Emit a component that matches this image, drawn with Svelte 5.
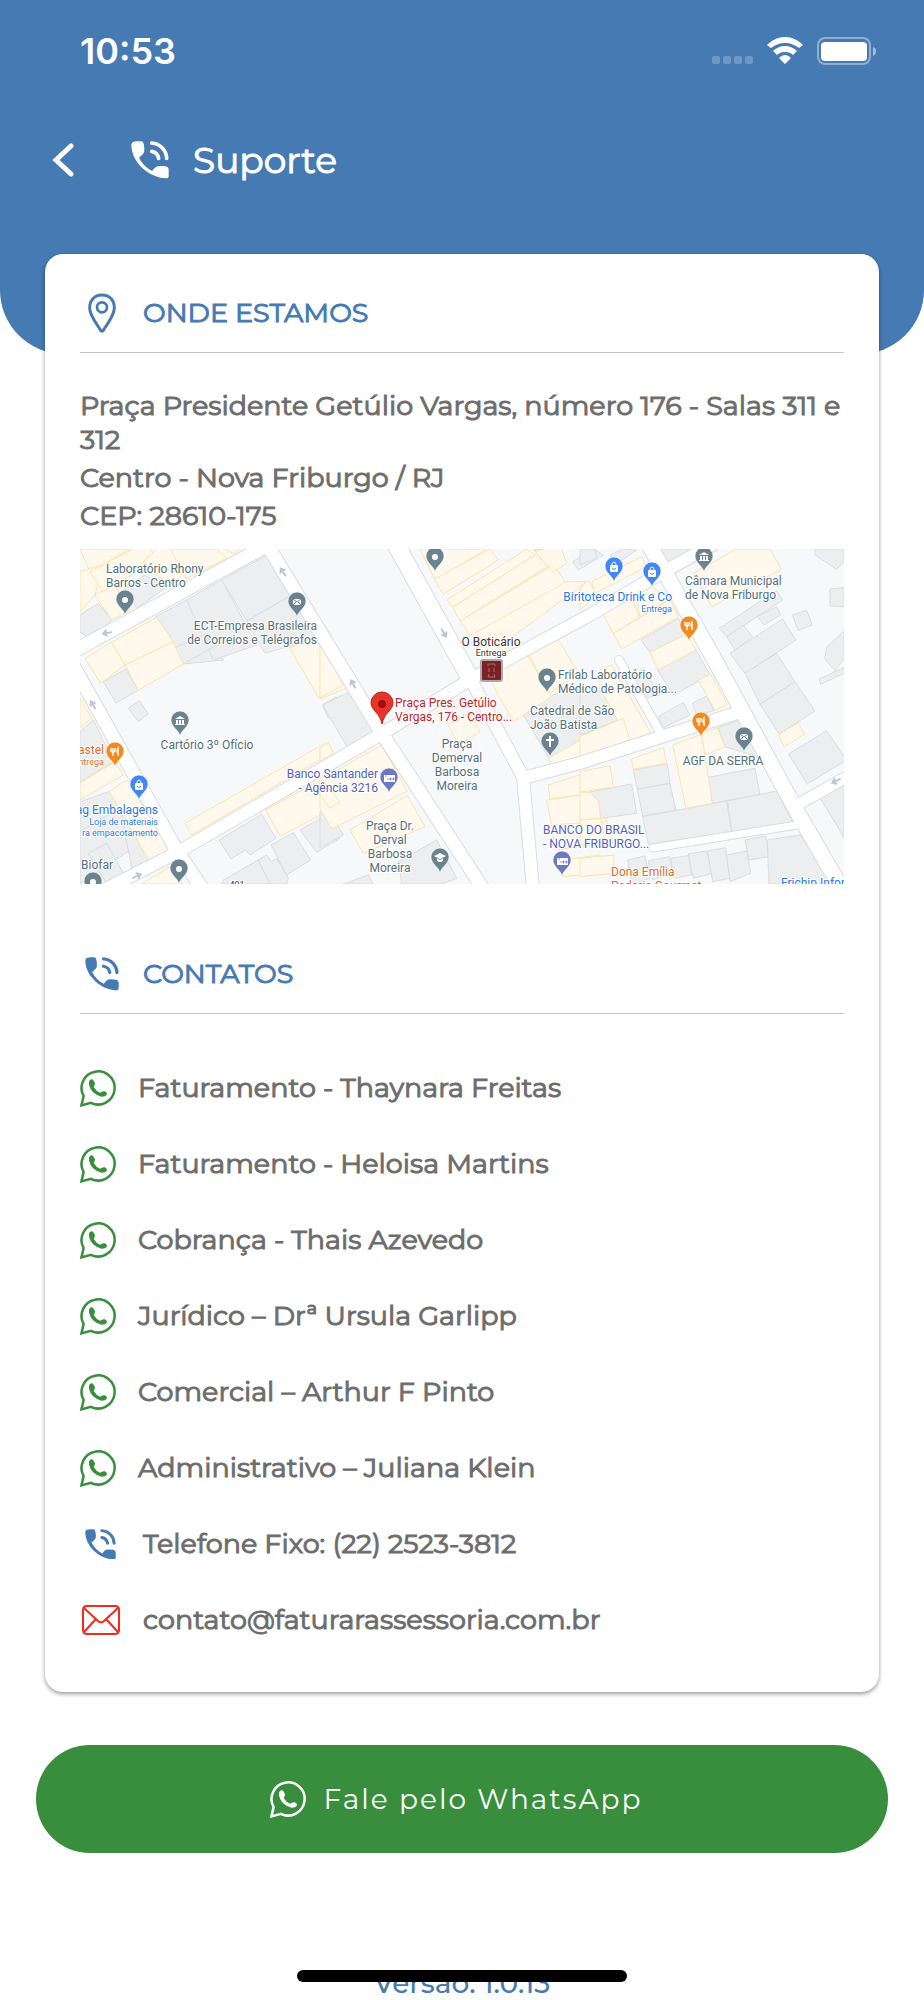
<script lang="ts">
  type Tile = { x: number; shops: string[]; blocks: string[] };
  type Pin = { x: number; y: number; kind: string; color: string };
  type Label = { x: number; y: number; lines: string[]; tone: string; anchor?: string; small?: boolean };

  const contacts = [
    { icon: "whatsapp", text: "Faturamento - Thaynara Freitas", href: "#thaynara" },
    { icon: "whatsapp", text: "Faturamento - Heloisa Martins", href: "#heloisa" },
    { icon: "whatsapp", text: "Cobrança - Thais Azevedo", href: "#thais" },
    { icon: "whatsapp", text: "Jurídico – Drª Ursula Garlipp", href: "#ursula" },
    { icon: "whatsapp", text: "Comercial – Arthur F Pinto", href: "#arthur" },
    { icon: "whatsapp", text: "Administrativo – Juliana Klein", href: "#juliana" },
    { icon: "phone", text: "Telefone Fixo: (22) 2523-3812", href: "tel:+552225233812" },
    { icon: "mail", text: "contato@faturarassessoria.com.br", href: "mailto:contato@faturarassessoria.com.br" }
  ];

  // Buildings, three tiles drawn at 3x and scaled down
  const tiles: Tile[] = [
    {
      x: -10,
      shops: [
        "30,12 180,12 60,80", "30,80 100,60 75,150 30,200", "75,150 130,120 190,190 125,225",
        "60,80 230,-10 260,45 100,140", "220,50 260,12 300,0 350,100 300,125", "300,12 440,12 470,40 350,100",
        "440,0 530,0 490,25", "125,292 260,217 310,290 165,360", "45,340 125,292 165,360 92,415",
        "165,360 310,290 340,357 205,436", "660,310 745,265 830,430 748,462", "345,835 770,592 790,620 365,870",
        "588,795 780,690 830,770 630,873", "30,460 65,520 30,548", "30,715 135,650 160,690 30,765",
        "118,740 170,705 305,920 245,960", "215,1017 300,965 340,1017"
      ],
      blocks: [
        "30,210 85,175 125,225 65,280 30,262", "165,130 225,90 285,130 200,190", "258,215 350,165 460,345 340,357",
        "350,165 455,105 560,300 430,345", "455,105 600,25 665,150 530,228", "530,228 665,150 740,280 585,325",
        "310,310 400,270 440,300 340,357", "100,410 168,372 205,436 138,474", "175,490 208,467 235,507 205,530",
        "30,560 70,525 130,650 30,712", "30,770 118,740 150,790 30,860", "30,860 150,790 215,890 60,1000 30,1017",
        "55,925 110,895 160,985 110,1017", "150,790 118,740 245,960 190,990", "447,885 575,808 618,880 540,930 527,915 483,942",
        "603,900 670,863 722,945 650,990", "455,1017 460,1005 565,945 600,1017", "565,945 590,930 605,950 620,940 655,1000 650,1017 600,1017",
        "690,855 790,800 810,880 740,922", "757,480 800,455 820,490 775,520"
      ]
    },
    {
      x: 240,
      shops: [
        "300,12 345,105 500,12", "343,103 510,12 535,45 370,147", "380,165 620,12 645,30 398,187",
        "398,187 645,30 690,60 420,228", "420,228 700,60 740,115 450,272", "645,20 720,0 740,55 700,80",
        "450,272 740,110 800,110 545,300", "470,310 545,262 570,315 500,360", "510,405 615,317 695,455 580,530",
        "620,320 710,275 775,385 690,445", "385,540 450,500 480,560 415,600", "0,285 70,420 0,458",
        "0,610 25,592 40,625 0,650", "0,705 185,600 262,738 35,852 0,790", "90,855 262,752 315,845 130,925",
        "685,720 810,680 850,740 690,762", "680,765 850,740 860,830 695,840", "695,840 860,830 880,890 705,915",
        "730,945 840,930 840,985 728,995", "685,640 810,570 870,620 700,672", "0,700 60,770 30,790 0,750"
      ],
      blocks: [
        "8,480 105,432 170,560 82,607", "610,510 700,450 800,420 860,540 690,645", "0,800 25,792 70,870 0,908",
        "235,950 350,885 410,1000 365,1017 245,1017", "758,50 820,12 850,30 775,75", "640,12 670,12 655,25",
        "70,1017 145,990 160,1017"
      ]
    },
    {
      x: 500,
      shops: [
        "0,130 25,105 50,150 0,195", "35,110 185,35 200,65 45,145", "65,200 150,155 180,215 100,265",
        "100,265 270,165 295,215 125,312", "165,145 215,125 265,165 180,215", "340,85 470,12 570,12 604,72 395,185",
        "210,322 320,268 348,314 235,375", "355,405 392,388 442,478 405,497", "60,375 95,360 212,563 150,592 60,430",
        "0,575 130,520 152,592 0,640", "278,600 365,568 397,775 318,790", "365,568 412,548 435,605 375,630",
        "155,642 250,608 260,655 160,673", "595,570 655,533 673,568 612,605", "0,680 90,662 100,725 0,742",
        "0,742 28,742 55,768 62,820 0,825", "0,825 62,820 75,890 0,900", "0,940 102,930 102,985 0,995"
      ],
      blocks: [
        "90,30 130,12 170,15 110,55", "232,375 348,314 390,390 280,450", "183,285 295,220 320,268 210,322",
        "235,515 310,472 330,510 250,548", "337,475 380,453 402,497 350,510", "418,250 590,137 608,165 440,275",
        "440,275 490,240 518,275 465,315", "533,215 590,185 602,210 552,240", "450,325 608,222 648,285 495,385",
        "495,385 590,325 645,410 540,478", "540,478 645,410 705,498 598,567", "637,210 680,196 697,240 655,257",
        "625,627 740,558 800,645 682,717", "705,12 792,12 792,50 770,73 705,30", "750,132 792,128 792,185 750,183",
        "742,305 792,258 792,340 765,377 733,340", "717,402 792,368 792,385 722,418", "230,12 340,12 265,62",
        "415,548 493,520 550,640 435,605", "385,697 525,670 540,748 397,775", "188,815 440,768 455,862 205,898",
        "443,768 590,738 640,835 455,862", "25,742 155,717 170,805 62,820", "160,675 262,656 270,715 172,733",
        "172,733 270,715 287,795 188,813", "143,945 195,933 210,1000 155,1017", "205,948 268,935 280,985 218,1005",
        "272,940 325,932 335,990 283,1000", "325,927 380,918 398,985 340,1000", "382,918 437,908 450,1000 398,1010",
        "440,930 500,918 512,985 450,1010", "495,885 557,873 567,935 507,945", "562,885 660,870 760,1017 567,1017",
        "705,735 792,685 792,880 770,840", "155,400 190,370 240,450 190,460", "0,445 60,430 130,520 0,570",
        "0,12 45,12 50,40 0,60"
      ]
    }
  ];

  const roads = [
    { d: "M-6 102 L184 -2", w: 13 },
    { d: "M186 -6 L303 186 L402 338", w: 13 },
    { d: "M315 -6 L390 129", w: 17 },
    { d: "M390 129 L443 228 L453 340", w: 12 },
    { d: "M20 343 L98 303 L303 184 L393 129 L510 66 L583 23 L634 -5", w: 12 },
    { d: "M-6 118 L97 302 L124 342", w: 13 },
    { d: "M568 -6 L632 106 L715 259 L764 344", w: 15 },
    { d: "M443 229 L500 214 L587 186 L660 163", w: 12 },
    { d: "M717 256 L770 226", w: 11 },
    { d: "M573 299 L717 276", w: 7 },
    { d: "M539 111 L580 183", w: 8 }
  ];

  const arrows = [
    { x: 27, y: 84, turn: 170 }, { x: 203, y: 23, turn: 235 }, { x: 13, y: 156, turn: 240 },
    { x: 57, y: 327, turn: -25 }, { x: 364, y: 84, turn: 60 }, { x: 273, y: 135, turn: 240 },
    { x: 756, y: 232, turn: 155 }
  ];

  const SLATE = "#6a838f";
  const BLUE = "#4285f4";
  const ORANGE = "#f28b1f";
  const INDIGO = "#6b78c4";

  const pins: Pin[] = [
    { x: 45, y: 66, kind: "dot", color: SLATE },
    { x: 217, y: 68, kind: "mail", color: SLATE },
    { x: 100, y: 187, kind: "bank", color: SLATE },
    { x: 35, y: 218, kind: "food", color: ORANGE },
    { x: 59, y: 251, kind: "bag", color: BLUE },
    { x: 13, y: 348, kind: "dot", color: SLATE },
    { x: 99, y: 335, kind: "dot", color: SLATE },
    { x: 355, y: 23, kind: "dot", color: SLATE },
    { x: 467, y: 144, kind: "dot", color: SLATE },
    { x: 470, y: 208, kind: "cross", color: SLATE },
    { x: 309, y: 244, kind: "cash", color: INDIGO },
    { x: 360, y: 324, kind: "school", color: SLATE },
    { x: 482, y: 327, kind: "cash", color: INDIGO },
    { x: 534, y: 33, kind: "bag", color: BLUE },
    { x: 572, y: 38, kind: "bag", color: BLUE },
    { x: 624, y: 23, kind: "bank", color: SLATE },
    { x: 609, y: 92, kind: "food", color: ORANGE },
    { x: 621, y: 188, kind: "food", color: ORANGE },
    { x: 664, y: 203, kind: "mail", color: SLATE }
  ];

  const labels: Label[] = [
    { x: 26, y: 24, lines: ["Laboratório Rhony", "Barros - Centro"], tone: "slate" },
    { x: 237, y: 81, lines: ["ECT-Empresa Brasileira", "de Correios e Telégrafos"], tone: "slate", anchor: "end" },
    { x: 127, y: 200, lines: ["Cartório 3º Ofício"], tone: "slate", anchor: "middle" },
    { x: 24, y: 205, lines: ["astel"], tone: "orange", anchor: "end" },
    { x: 24, y: 216, lines: ["ntrega"], tone: "orange", anchor: "end", small: true },
    { x: 78, y: 265, lines: ["ag Embalagens"], tone: "blue", anchor: "end" },
    { x: 78, y: 276, lines: ["Loja de materiais", "ra empacotamento"], tone: "blue", anchor: "end", small: true },
    { x: 1, y: 320, lines: ["Biofar"], tone: "slate" },
    { x: 157, y: 339, lines: ["491"], tone: "dark", anchor: "middle", small: true },
    { x: 298, y: 229, lines: ["Banco Santander", "- Agência 3216"], tone: "indigo", anchor: "end" },
    { x: 310, y: 281, lines: ["Praça Dr.", "Derval", "Barbosa", "Moreira"], tone: "slate", anchor: "middle" },
    { x: 377, y: 199, lines: ["Praça", "Demerval", "Barbosa", "Moreira"], tone: "slate", anchor: "middle" },
    { x: 411, y: 97, lines: ["O Boticário"], tone: "dark", anchor: "middle" },
    { x: 411, y: 107, lines: ["Entrega"], tone: "dark", anchor: "middle", small: true },
    { x: 315, y: 158, lines: ["Praça Pres. Getúlio", "Vargas, 176 - Centro..."], tone: "red" },
    { x: 478, y: 130, lines: ["Frilab Laboratório", "Médico de Patologia..."], tone: "slate" },
    { x: 450, y: 166, lines: ["Catedral de São", "João Batista"], tone: "slate" },
    { x: 592, y: 52, lines: ["Biritoteca Drink e Co"], tone: "blue", anchor: "end" },
    { x: 592, y: 63, lines: ["Entrega"], tone: "blue", anchor: "end", small: true },
    { x: 605, y: 36, lines: ["Câmara Municipal", "de Nova Friburgo"], tone: "slate" },
    { x: 643, y: 216, lines: ["AGF DA SERRA"], tone: "slate", anchor: "middle" },
    { x: 463, y: 285, lines: ["BANCO DO BRASIL", "- NOVA FRIBURGO..."], tone: "indigo" },
    { x: 531, y: 327, lines: ["Dona Emília", "Padaria Gourmet"], tone: "orange" },
    { x: 701, y: 338, lines: ["Frichip Infor"], tone: "blue" }
  ];
</script>

{#snippet phoneIcon()}
  <svg class="phone-icon" viewBox="0 0 114 113" aria-hidden="true">
    <path fill="currentColor" d="M6 3 Q10 0 30 1 Q37 1 38 8 L40 22 Q41 34 36 39 L24 50 Q37 76 63 90 L72 80 Q77 75 85 75 L104 76 Q113 78 113 86 V105 Q113 112 105 112 C55 110 2 66 1 12 Q1 6 6 3Z" />
    <path fill="none" stroke="currentColor" stroke-width="11" stroke-linecap="round" d="M62 6 A48 48 0 0 1 107 52 M62 31 A26 26 0 0 1 83 52" />
  </svg>
{/snippet}

{#snippet whatsappIcon()}
  <svg class="whatsapp-icon" viewBox="0 0 100 106" aria-hidden="true">
    <path fill="none" stroke="currentColor" stroke-width="7" d="M10 75 A46 46 0 1 1 30 94 L4 101 Z" />
    <path fill="currentColor" d="M27 31 Q33 26 37 31 Q43 38 41 44 L38 50 Q45 62 56 66 Q62 60 69 62 Q76 66 75 70 Q71 77 60 77 Q31 70 25 43 Q24 35 27 31Z" />
  </svg>
{/snippet}

{#snippet pinGlyph(kind: string)}
  {#if kind === "dot"}
    <circle cy="-15" r="3" fill="#fff" />
  {:else if kind === "mail"}
    <rect x="-4" y="-18" width="8" height="6" fill="#fff" />
    <path d="M-4 -18 L0 -15 L4 -18 M-4 -12 L-1 -15 M4 -12 L1 -15" stroke={SLATE} fill="none" />
  {:else if kind === "bank"}
    <path d="M-5 -17 L0 -20 L5 -17 Z M-5 -12 H5 V-11 H-5Z M-4 -16 H-2 V-12 H-4Z M-1 -16 H1 V-12 H-1Z M2 -16 H4 V-12 H2Z" fill="#fff" />
  {:else if kind === "food"}
    <path d="M-4 -19 V-16 Q-4 -15 -2 -15 V-11 M-2 -19 V-15 M0 -19 V-16 Q0 -15 -2 -15 M3 -11 V-19 Q2 -18 2 -15 H3" stroke="#fff" stroke-width="1.4" fill="none" />
  {:else if kind === "bag"}
    <rect x="-4" y="-17" width="8" height="7" rx="1" fill="#fff" />
    <path d="M-2 -17 Q-2 -20 0 -20 Q2 -20 2 -17" stroke="#fff" fill="none" />
    <path d="M-2 -14 Q0 -11 2 -14" stroke={BLUE} fill="none" />
  {:else if kind === "cash"}
    <rect x="-5" y="-18" width="11" height="7" fill="#fff" />
    <path d="M-4 -17 H-2 M-1 -15 V-13 M1 -15 H2 V-13 H1Z M4 -15 H5 V-13 H4Z" stroke={INDIGO} stroke-width=".8" fill="none" />
  {:else if kind === "cross"}
    <path d="M0 -21 V-10 M-4 -17 H4" stroke="#fff" stroke-width="2" />
  {:else if kind === "school"}
    <path d="M-6 -17 L0 -20 L6 -17 L0 -14Z M-3 -15 V-12 Q0 -10 3 -12 V-15 L0 -13Z" fill="#fff" />
  {/if}
{/snippet}

<div class="screen">
  <header class="top">
    <div class="status">
      <span class="time">10:53</span>
      <div class="indicators">
        <svg width="42" height="28" viewBox="0 0 42 28" aria-hidden="true">
          {#each [1, 12, 23, 34] as x}
            <rect {x} y="19" width="8" height="8" rx="2" fill="#fff" opacity=".22" />
          {/each}
        </svg>
        <svg width="36" height="28" viewBox="0 0 36 28" aria-hidden="true">
          <path d="M18 0 C11 0 5 3 0 8 L4 11 C8 8 12 6 18 6 C24 6 28 8 32 11 L36 8 C31 3 25 0 18 0Z M18 9 C13 9 9 11 6 14 L10 18 C12 16 14 15 18 15 C22 15 24 16 26 18 L30 14 C27 11 23 9 18 9Z M18 18 C16 18 14 19 12 21 L18 27 L24 21 C22 19 20 18 18 18Z" fill="#fff" />
        </svg>
        <svg width="60" height="28" viewBox="0 0 60 28" aria-hidden="true">
          <rect x="1" y="1" width="52" height="26" rx="7" fill="none" stroke="#fff" stroke-width="2" opacity=".4" />
          <rect x="4" y="5" width="46" height="19" rx="4" fill="#fff" />
          <path d="M56 10 Q59 11 59 14 Q59 18 56 19Z" fill="#fff" opacity=".5" />
        </svg>
      </div>
    </div>
    <nav class="title-bar">
      <button class="back" aria-label="Voltar">
        <svg width="22" height="36" viewBox="0 0 22 36" aria-hidden="true">
          <path d="M19 4 L4 18 L19 32" fill="none" stroke="#fff" stroke-width="5" stroke-linecap="round" />
        </svg>
      </button>
      {@render phoneIcon()}
      <h1>Suporte</h1>
    </nav>
  </header>

  <main class="card">
    <section>
      <h2>
        <span class="heading-icon">
          <svg width="28" height="40" viewBox="0 0 84 118" aria-hidden="true">
            <path d="M42 5 C18 5 5 22 5 44 C5 67 30 97 38 111 Q42 116 46 111 C54 97 79 67 79 44 C79 22 66 5 42 5Z" fill="none" stroke="currentColor" stroke-width="9" />
            <circle cx="42" cy="42" r="15" fill="none" stroke="currentColor" stroke-width="8" />
          </svg>
        </span>
        ONDE ESTAMOS
      </h2>
      <address>
        <p>Praça Presidente Getúlio Vargas, número 176 - Salas 311 e 312</p>
        <p>Centro - Nova Friburgo / RJ</p>
        <p>CEP: 28610-175</p>
      </address>

      <svg class="map" viewBox="0 0 764 335" role="img" aria-label="Mapa">
        <rect width="764" height="335" fill="#f6f8fa" />
        {#each tiles as tile}
          <g transform="translate({tile.x} -4) scale(.3333)" stroke-width="3">
            {#each tile.blocks as points}
              <polygon {points} fill="#eceef0" stroke="#dadce0" />
            {/each}
            {#each tile.shops as points}
              <polygon {points} fill="#fef9ec" stroke="#fde3ac" />
            {/each}
          </g>
        {/each}
        {#each roads as road}
          <path class="road" d={road.d} stroke="#d9dce1" stroke-width={road.w + 2} />
        {/each}
        {#each roads as road}
          <path class="road" d={road.d} stroke="#fff" stroke-width={road.w} />
        {/each}
        {#each arrows as a}
          <path d="M-5 0 H4 M0 -3 L4 0 L0 3" transform="translate({a.x} {a.y}) rotate({a.turn})" fill="none" stroke="#c0c3d8" stroke-width="2" />
        {/each}
        {#each labels as label}
          <text class={label.tone} class:small={label.small} text-anchor={label.anchor ?? "start"}>
            {#each label.lines as line, i}
              <tspan x={label.x} y={label.y + i * (label.small ? 11 : 14)}>{line}</tspan>
            {/each}
          </text>
        {/each}
        {#each pins as pin}
          <g transform="translate({pin.x} {pin.y})">
            <path d="M0 0 C-1 -6 -9 -9 -9 -16 A9 9 0 0 1 9 -16 C9 -9 1 -6 0 0Z" fill={pin.color} stroke="#fff" stroke-opacity=".6" />
            {@render pinGlyph(pin.kind)}
          </g>
        {/each}
        <rect x="401" y="111" width="21" height="21" rx="2" fill="#7c2028" stroke="#a9a9ad" stroke-width="2" />
        <path d="M408 117 V115 H415 V117 M409 119 V123 M414 119 V123 M409 125 L408 128 H415 L414 125" fill="none" stroke="#a8705c" />
        <path d="M302 175 C300 164 291 161 291 154 A11 11 0 0 1 313 154 C313 161 304 164 302 175Z" fill="#e8352c" stroke="#c5221f" />
        <circle cx="302" cy="155" r="4" fill="#a50e0e" />
      </svg>
    </section>

    <section class="contacts">
      <h2>
        <span class="heading-icon">{@render phoneIcon()}</span>
        CONTATOS
      </h2>
      <ul>
        {#each contacts as contact}
          <li>
            <a href={contact.href}>
              <span class="contact-icon {contact.icon}">
                {#if contact.icon === "whatsapp"}
                  {@render whatsappIcon()}
                {:else if contact.icon === "phone"}
                  {@render phoneIcon()}
                {:else}
                  <svg width="38" height="30" viewBox="0 0 38 30" aria-hidden="true">
                    <path d="M5 1 H33 Q37 1 37 5 V25 Q37 29 33 29 H5 Q1 29 1 25 V5 Q1 1 5 1Z M2 3 L16 16 Q19 19 22 16 L36 3 M2 27 L14 14 M36 27 L24 14" fill="none" stroke="currentColor" stroke-width="2" />
                  </svg>
                {/if}
              </span>
              {contact.text}
            </a>
          </li>
        {/each}
      </ul>
    </section>
  </main>

  <button class="whatsapp-button">
    {@render whatsappIcon()}
    Fale pelo WhatsApp
  </button>

  <footer>
    <p>Versão: 1.0.13</p>
    <div class="home-indicator"></div>
  </footer>
</div>

<style>
  :global(body) {
    margin: 0;
    background: #fff;
  }

  .screen {
    display: flex;
    flex-direction: column;
    font-family: Montserrat, "Open Sans", sans-serif;
    font-size: 28px;
    line-height: 34px;
    color: #6d6d6d;
  }

  h1, h2, p, ul {
    margin: 0;
    padding: 0;
    font-weight: inherit;
  }

  button {
    border: 0;
    padding: 0;
    background: none;
    color: #fff;
    font: inherit;
  }

  .top {
    padding-bottom: 146px;
    background: #467ab2;
    border-radius: 0 0 64px 64px;
    color: #fff;
  }

  .status {
    display: flex;
    align-items: center;
    justify-content: space-between;
    height: 102px;
    padding: 0 47px 0 80px;
    box-sizing: border-box;
  }

  .time {
    font-family: Inter, sans-serif;
    font-size: 36px;
    font-weight: 600;
  }

  .indicators {
    display: flex;
    gap: 14px;
  }

  .title-bar {
    display: flex;
    align-items: center;
    height: 96px;
    padding: 10px 52px 0;
  }

  .title-bar .phone-icon {
    width: 38px;
    margin-left: 57px;
    margin-right: 24px;
  }

  .back {
    display: flex;
  }

  h1 {
    font-size: 36px;
    line-height: 44px;
    -webkit-text-stroke: 1px;
  }

  .card {
    margin: -100px 45px 0;
    padding: 20px 35px 34px;
    border-radius: 18px;
    background: #fff;
    box-shadow: 0 2px 4px rgba(0, 0, 0, 0.4);
    font-size: 27px;
    -webkit-text-stroke: 1px;
  }

  h2 {
    display: flex;
    align-items: center;
    height: 78px;
    border-bottom: 1px solid #c4c4c4;
    font-size: 27px;
    color: #467ab2;
  }

  .heading-icon {
    display: flex;
    justify-content: center;
    width: 44px;
    margin-right: 19px;
  }

  .heading-icon .phone-icon {
    width: 34px;
  }

  address {
    display: flex;
    flex-direction: column;
    gap: 4px;
    margin: 36px 0 16px;
    font-style: normal;
  }

  .map {
    display: block;
    width: 100%;
    font-family: Roboto, sans-serif;
    font-size: 12px;
    -webkit-text-stroke: 0;
  }

  .road {
    fill: none;
    stroke-linecap: round;
    stroke-linejoin: round;
  }

  .map text {
    paint-order: stroke;
    stroke: #fff;
    stroke-width: 2px;
    stroke-linejoin: round;
  }

  .map .small {
    font-size: 9px;
  }

  .slate { fill: #566f79; }
  .orange { fill: #db6d1e; }
  .blue { fill: #2b78e4; }
  .indigo { fill: #5361bd; }
  .red { fill: #c5221f; }
  .dark { fill: #3c3537; }

  .contacts {
    margin-top: 51px;
  }

  ul {
    margin-top: 36px;
    list-style: none;
  }

  li a {
    display: flex;
    align-items: center;
    height: 76px;
    color: inherit;
    text-decoration: none;
  }

  .contact-icon {
    display: flex;
    justify-content: center;
    width: 41px;
    margin-right: 22px;
    color: #ee2b1c;
  }

  .contact-icon.whatsapp {
    width: 36px;
    color: #388e3c;
  }

  .contact-icon.phone {
    color: #467ab2;
  }

  .contact-icon .phone-icon {
    width: 31px;
  }

  .whatsapp-icon {
    width: 36px;
  }

  .whatsapp-button {
    display: flex;
    align-items: center;
    justify-content: center;
    gap: 18px;
    height: 108px;
    margin: 53px 36px 0;
    padding-right: 12px;
    border-radius: 54px;
    background: #388e3c;
    letter-spacing: 2px;
  }

  footer {
    position: relative;
    margin-top: 113px;
    text-align: center;
    font-weight: 500;
    color: #467ab2;
  }

  .home-indicator {
    position: absolute;
    top: 4px;
    left: 0;
    right: 0;
    width: 330px;
    height: 12px;
    margin: 0 auto;
    border-radius: 6px;
    background: #000;
  }
</style>
